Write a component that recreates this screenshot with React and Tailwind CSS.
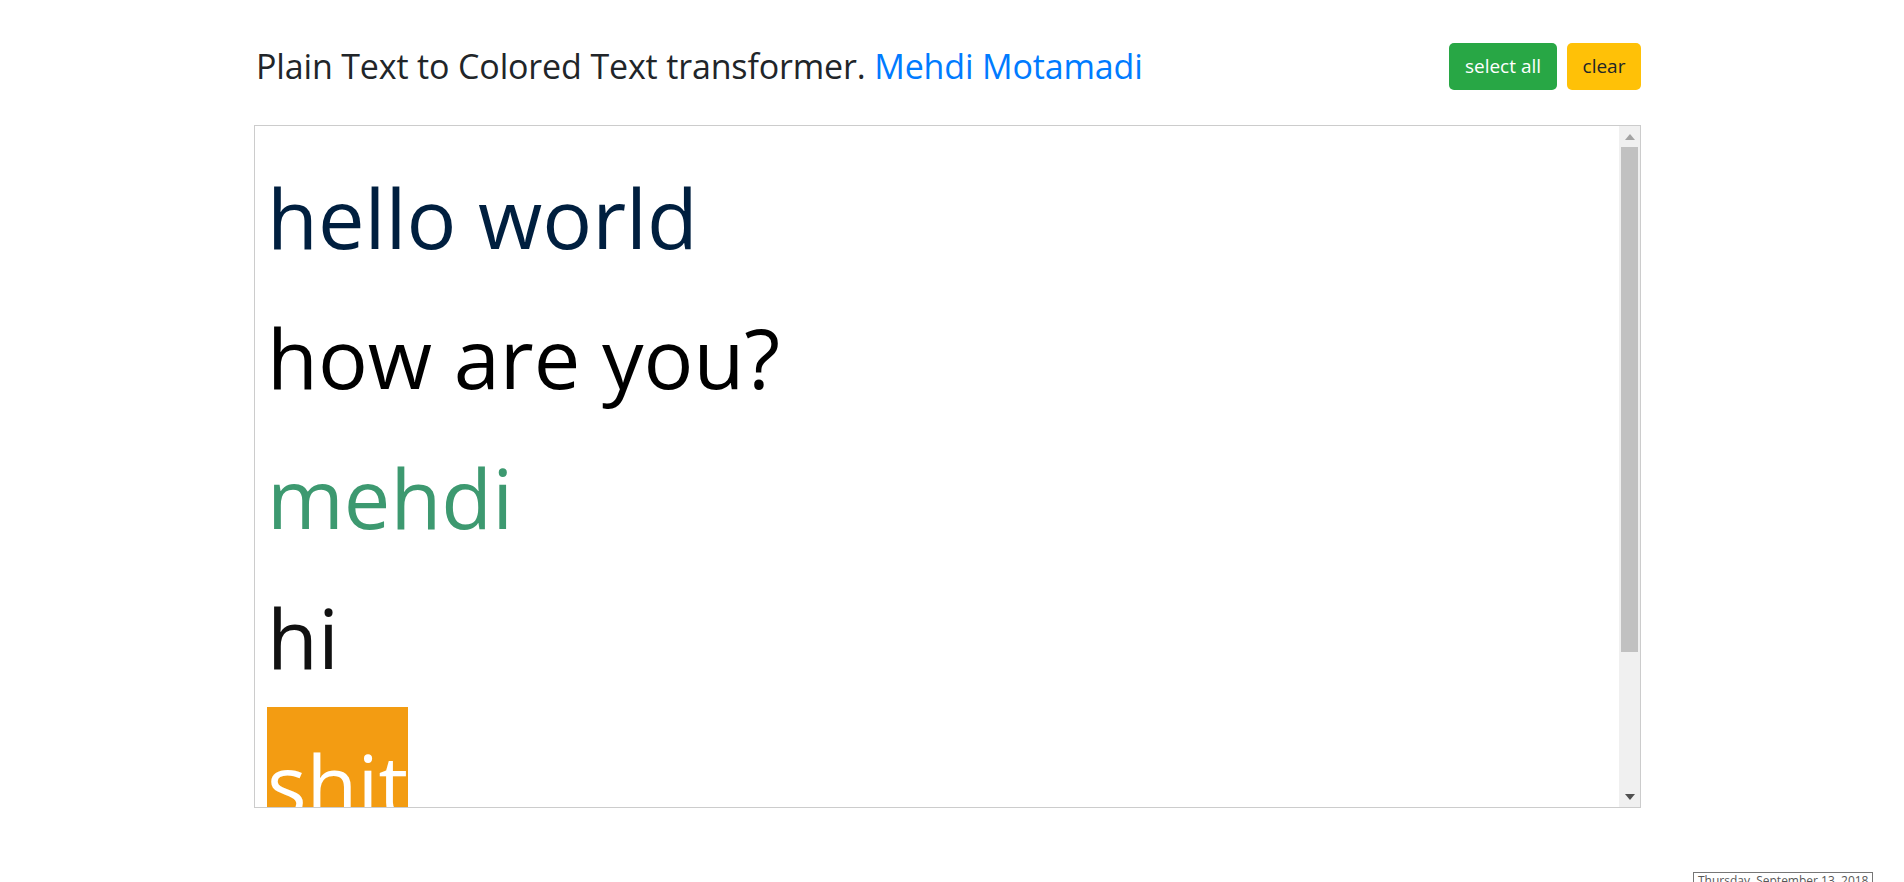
import React from 'react'

const LINES = [
  { text: 'hello world', color: 'text-[#001f3f]' },
  { text: 'how are you?', color: 'text-black' },
  { text: 'mehdi', color: 'text-[#3d9970]' },
  { text: 'hi', color: 'text-[#111111]' },
]

export default function App() {
  return (
    <div className="relative min-h-screen bg-white font-['Open_Sans',sans-serif] overflow-hidden">
      <div className="ml-[254px] w-[1387px] pt-[43px]">
        {/* Header */}
        <div className="flex items-start justify-between h-[47px]">
          <h3 className="text-[34px] leading-[47px] font-medium text-[#212529] pl-[2px] tracking-[-0.15px]">
            Plain Text to Colored Text transformer. <a href="#" className="text-[#007bff]">Mehdi Motamadi</a>
          </h3>
          <div className="flex gap-[10px]">
            <button className="w-[108px] h-[47px] rounded-[5px] bg-[#28a745] text-white text-[19px]">select all</button>
            <button className="w-[74px] h-[47px] rounded-[5px] bg-[#ffc107] text-[#212529] text-[19px]">clear</button>
          </div>
        </div>

        {/* Editor */}
        <div className="mt-[35px] h-[683px] border border-[#cccccc] flex overflow-hidden">
          <div className="flex-1 overflow-hidden pl-[12px] pt-[21px] text-[83px] leading-[140px]">
            {LINES.map(l => (
              <div key={l.text} className={`whitespace-nowrap ${l.color}`}>{l.text}</div>
            ))}
            <div className="whitespace-nowrap">
              <span className="inline-block bg-[#f39c12] text-white pt-[14px] leading-normal">shit</span>
            </div>
          </div>
          {/* scrollbar */}
          <div className="w-[21px] bg-[#f0f0f0] flex flex-col">
            <div className="h-[21px] flex items-center justify-center">
              <svg width="10" height="6" viewBox="0 0 10 6"><path d="M0 6 L5 0 L10 6 Z" fill="#a3a3a3" /></svg>
            </div>
            <div className="mx-[2px] h-[505px] bg-[#c1c1c1]" />
            <div className="flex-1" />
            <div className="h-[21px] flex items-center justify-center">
              <svg width="10" height="6" viewBox="0 0 10 6"><path d="M0 0 L10 0 L5 6 Z" fill="#505050" /></svg>
            </div>
          </div>
        </div>
      </div>

      {/* tooltip */}
      <div className="absolute left-[1693px] top-[872px] border border-[#767676] bg-white px-[4px] text-[12px] leading-[16px] text-[#575757] whitespace-nowrap">
        Thursday, September 13, 2018
      </div>
    </div>
  )
}
